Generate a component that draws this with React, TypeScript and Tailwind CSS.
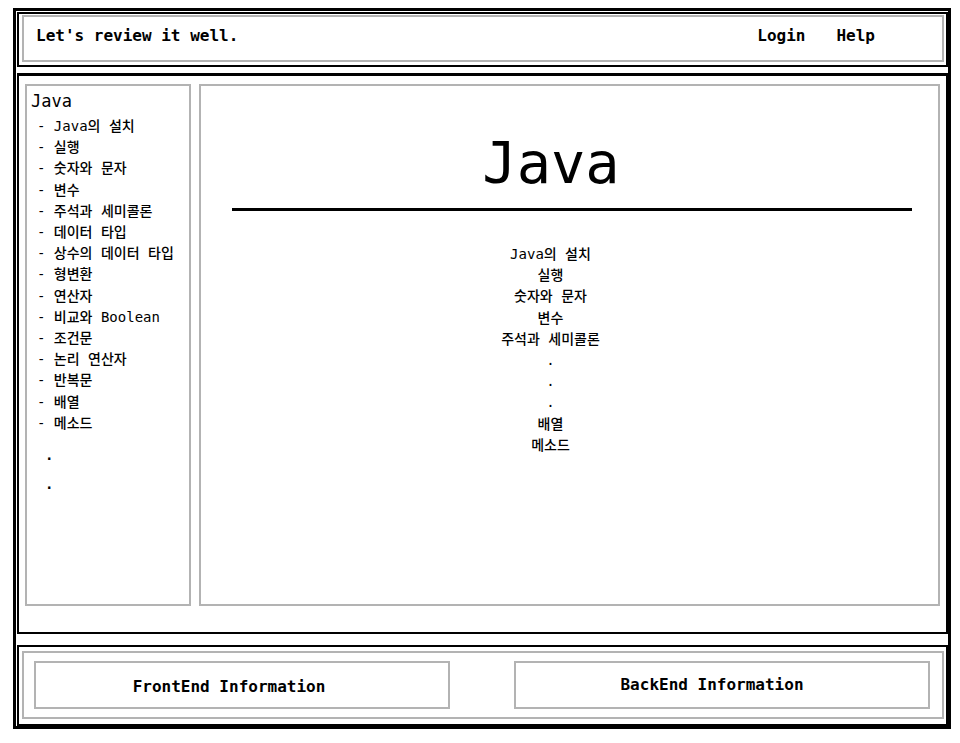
const MONO = "font-['DejaVu_Sans_Mono','Noto_Sans_CJK_KR',monospace]";

const SIDE_ITEMS = [
  "Java의 설치",
  "실행",
  "숫자와 문자",
  "변수",
  "주석과 세미콜론",
  "데이터 타입",
  "상수의 데이터 타입",
  "형변환",
  "연산자",
  "비교와 Boolean",
  "조건문",
  "논리 연산자",
  "반복문",
  "배열",
  "메소드",
];

const CENTER_ITEMS = [
  "Java의 설치",
  "실행",
  "숫자와 문자",
  "변수",
  "주석과 세미콜론",
  ".",
  ".",
  ".",
  "배열",
  "메소드",
];

export default function App() {
  return (
    <div className={`bg-white text-black ${MONO} w-[960px] h-[743px] pt-[8px] pl-[13px]`}>
      <div className="flex h-[721px] w-[938px] flex-col border-[3px] border-black pt-[1px]">
        {/* header */}
        <header className="ml-[1px] h-[55px] shrink-0 border-2 border-black pb-[3px] pl-[3px] pr-[2px] pt-[1px]">
          <div className="flex h-full items-center justify-between border-2 border-[#b3b3b3] pb-[5px] pl-[12px] pr-[67px] text-[16px] font-bold">
            <span>Let's review it well.</span>
            <nav className="flex gap-[31px]">
              <a>Login</a>
              <a>Help</a>
            </nav>
          </div>
        </header>

        {/* main */}
        <main className="ml-[1px] mt-[6px] flex h-[561px] shrink-0 gap-[8px] border-2 border-t-[3px] border-black pb-[26px] pl-[6px] pr-[6px] pt-[8px]">
          <aside className="w-[166px] shrink-0 border-2 border-[#b3b3b3] pt-[5px]">
            <div className="pl-[4px] text-[17px] leading-[21px]">Java</div>
            <ul className="mt-[4px] pl-[10px] text-[14px] leading-[21.2px] font-medium">
              {SIDE_ITEMS.map((item) => (
                <li key={item} className="whitespace-nowrap">
                  - {item}
                </li>
              ))}
            </ul>
            <div className="mt-[11px] pl-[18px] text-[14px] leading-[21px] font-bold">.</div>
            <div className="mt-[8px] pl-[18px] text-[14px] leading-[21px] font-bold">.</div>
          </aside>

          <section className="flex-1 border-2 border-[#b3b3b3]">
            <div className="pr-[37px] text-center">
              <h1 className="mt-[49px] text-[57px] leading-none">Java</h1>
            </div>
            <hr className="ml-[31px] mr-[26px] mt-[16px] h-[3px] border-0 bg-black" />
            <ul className="mt-[33px] pr-[38px] text-center text-[14px] leading-[21.2px] font-medium">
              {CENTER_ITEMS.map((item, i) => (
                <li key={i}>{item}</li>
              ))}
            </ul>
          </section>
        </main>

        {/* footer */}
        <footer className="ml-[1px] mt-[11px] h-[81px] shrink-0 border-2 border-black pb-[5px] pl-[3px] pr-[2px] pt-[4px]">
          <div className="flex h-full gap-[64px] border-2 border-[#b3b3b3] pb-[8px] pl-[10px] pr-[12px] pt-[8px] text-[16px] font-bold">
            <button className="flex w-[416px] items-center justify-center border-2 border-[#b3b3b3] pr-[26px] pt-[4px]">
              FrontEnd Information
            </button>
            <button className="flex w-[416px] items-center justify-center border-2 border-[#b3b3b3] pr-[20px]">
              BackEnd Information
            </button>
          </div>
        </footer>
      </div>
    </div>
  );
}
